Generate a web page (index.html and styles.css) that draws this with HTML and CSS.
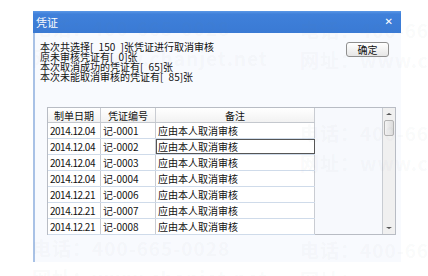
FILE: index.html
```html
<!DOCTYPE html>
<html>
<head>
<meta charset="utf-8">
<link rel="stylesheet" href="styles.css">
</head>
<body>
<div class="page">
  <div class="dialog">
    <div class="titlebar">
      <span class="title">凭证</span>
      <span class="close">✕</span>
    </div>
    <div class="content">
      <div class="top">
        <div class="msg">
          <div>本次共选择[ 150 ]张凭证进行取消审核</div>
          <div>原未审核凭证有[ 0]张</div>
          <div>本次取消成功的凭证有[ 65]张</div>
          <div>本次未能取消审核的凭证有[ 85]张</div>
        </div>
        <button class="btn">确定</button>
      </div>
      <div class="grid">
        <div class="tbl">
          <div class="row head">
            <div class="c c1">制单日期</div>
            <div class="c c2">凭证编号</div>
            <div class="c c3">备注</div>
          </div>
          <div class="row"><div class="c c1 d">2014.12.04</div><div class="c c2">记-0001</div><div class="c c3">应由本人取消审核</div></div>
          <div class="row"><div class="c c1 d">2014.12.04</div><div class="c c2">记-0002</div><div class="c c3 focus">应由本人取消审核</div></div>
          <div class="row"><div class="c c1 d">2014.12.04</div><div class="c c2">记-0003</div><div class="c c3">应由本人取消审核</div></div>
          <div class="row"><div class="c c1 d">2014.12.04</div><div class="c c2">记-0004</div><div class="c c3">应由本人取消审核</div></div>
          <div class="row"><div class="c c1 d">2014.12.21</div><div class="c c2">记-0006</div><div class="c c3">应由本人取消审核</div></div>
          <div class="row"><div class="c c1 d">2014.12.21</div><div class="c c2">记-0007</div><div class="c c3">应由本人取消审核</div></div>
          <div class="row"><div class="c c1 d">2014.12.21</div><div class="c c2">记-0008</div><div class="c c3">应由本人取消审核</div></div>
        </div>
        <div class="filler"></div>
        <div class="scroll">
          <div class="arrow up"></div>
          <div class="thumb"></div>
          <div class="track"></div>
          <div class="arrow down"></div>
        </div>
      </div>
    </div>
  </div>
  <div class="wm wm1"><div>电话：400-665-0028</div><div>网址：www.chanjet.net</div></div>
  <div class="wm wm2"><div>电话：400-665-0028</div><div>网址：www.chanjet.net</div></div>
  <div class="wm wm3"><div>电话：400-665-0028</div><div>网址：www.chanjet.net</div></div>
  <div class="wm wm4"><div>电话：400-665-0028</div><div>网址：www.chanjet.net</div></div>
  <div class="wm wm5"><div>电话：400-665-0028</div><div>网址：www.chanjet.net</div></div>
</div>
</body>
</html>
```
FILE: styles.css
```css
html, body {
  margin: 0;
  padding: 0;
  background: #ffffff;
  font-family: "Noto Sans CJK SC", "Liberation Sans", sans-serif;
}
.page {
  position: relative;
  width: 428px;
  height: 276px;
  overflow: hidden;
  padding: 11px 0 0 33px;
  box-sizing: border-box;
}
.dialog {
  width: 368px;
  height: 251px;
  background: #f8fafe;
  border-left: 2px solid #a9c2e6;
  box-sizing: border-box;
  display: flex;
  flex-direction: column;
}
.titlebar {
  height: 22px;
  margin-left: -2px;
  background: linear-gradient(#5b98e6 0px, #3f80da 3px, #3a7ad4 100%);
  display: flex;
  align-items: center;
  justify-content: space-between;
  padding: 0 8px 0 3px;
  color: #ffffff;
}
.title {
  font-size: 11px;
  line-height: 12px;
}
.close {
  font-size: 10px;
  font-weight: bold;
  line-height: 10px;
  font-family: "DejaVu Sans", sans-serif;
}
.content {
  padding: 9px 12px 0 5px;
}
.top {
  display: flex;
  justify-content: space-between;
  align-items: flex-start;
}
.msg {
  font-size: 10px;
  line-height: 10px;
  color: #111111;
  word-spacing: 3px;
}
.btn {
  width: 43px;
  height: 15px;
  margin: 0;
  padding: 0;
  border: 1px solid #8f8f8f;
  border-radius: 3px;
  background: linear-gradient(#ffffff, #e6e6e6);
  font-family: "Noto Sans CJK SC", sans-serif;
  font-size: 10px;
  line-height: 13px;
  color: #111111;
}
.grid {
  margin: 25px 0 0 7px;
  width: 349px;
  height: 128px;
  border: 1px solid #b8bcc4;
  box-sizing: border-box;
  display: flex;
  background: #f7f9fd;
}
.tbl {
  display: flex;
  flex-direction: column;
  width: 267px;
}
.row {
  display: flex;
  height: 16px;
  box-sizing: border-box;
  border-bottom: 1px solid #cfdbea;
  background: #ffffff;
}
.row.head {
  height: 15px;
  background: linear-gradient(#ffffff, #f2f2f2);
  border-bottom: 1px solid #c4c8ce;
}
.c {
  font-size: 10px;
  line-height: 15px;
  color: #111111;
  padding-left: 2px;
  box-sizing: border-box;
  border-right: 1px solid #c9ccd2;
  white-space: nowrap;
  overflow: hidden;
}
.c1 { width: 53px; }
.c2 { width: 55px; }
.c3 { width: 159px; }
.head .c {
  text-align: center;
  padding-left: 0;
}
.d {
  letter-spacing: -0.5px;
}
.focus {
  border: 1px solid #555555;
  line-height: 13px;
  padding-left: 1px;
}
.filler {
  flex: 1;
}
.scroll {
  width: 12px;
  display: flex;
  flex-direction: column;
  border-left: 1px solid #c8ccd2;
  background: #f0f0f0;
}
.arrow {
  height: 12px;
  position: relative;
}
.arrow::after {
  content: "";
  position: absolute;
  left: 3px;
  border-left: 3px solid transparent;
  border-right: 3px solid transparent;
}
.up::after {
  top: 5px;
  border-bottom: 2px solid #555555;
}
.down::after {
  top: 5px;
  border-top: 2px solid #555555;
}
.thumb {
  height: 14px;
  margin: 0 1px;
  border: 1px solid #b4b4b4;
  border-radius: 2px;
  background: linear-gradient(90deg, #f4f4f4, #dcdcdc);
}
.track {
  flex: 1;
}
.wm {
  position: absolute;
  pointer-events: none;
  font-size: 19px;
  font-weight: bold;
  line-height: 30px;
  color: rgba(120, 130, 150, 0.05);
  white-space: nowrap;
  letter-spacing: 1px;
}
.wm1 { left: 32px; top: 13px; }
.wm2 { left: 300px; top: 15px; }
.wm3 { left: 300px; top: 118px; }
.wm4 { left: 32px; top: 233px; }
.wm5 { left: 300px; top: 235px; }
```
